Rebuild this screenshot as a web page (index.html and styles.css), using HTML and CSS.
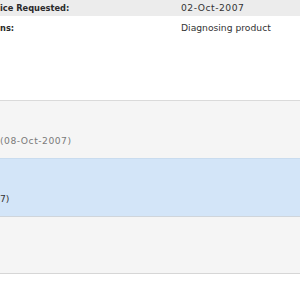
FILE: index.html
```html
<!DOCTYPE html>
<html lang="en">

<head>
  <meta charset="UTF-8" />
  <meta name="viewport" content="width=device-width, initial-scale=1.0" />
  <title>Service Request</title>
  <link rel="stylesheet" href="styles.css">
</head>

<body>
  <div class="details">
    <div class="row row-head">
      <span class="label">ice Requested:</span>
      <span class="value date">02-Oct-2007</span>
    </div>
    <div class="row row-body">
      <span class="label">ns:</span>
      <span class="value">Diagnosing product</span>
    </div>
  </div>
  <ul class="history">
    <li class="entry">
      <span class="entry-text muted date">(08-Oct-2007)</span>
    </li>
    <li class="entry selected">
      <span class="entry-text">7)</span>
    </li>
    <li class="entry last">
      <span class="entry-text"></span>
    </li>
  </ul>
</body>

</html>
```

FILE: styles.css
```css
body {
  margin: 0;
  width: 300px;
  height: 300px;
  overflow: hidden;
  background: #fff;
  font-family: "DejaVu Sans", Verdana, sans-serif;
  font-size: 9.2px;
  color: #333;
}

.row {
  display: grid;
  grid-template-columns: 181px auto;
  white-space: nowrap;
}

.label {
  font-family: "DejaVu Sans Condensed", "DejaVu Sans", sans-serif;
  font-weight: bold;
  color: #2a2a2a;
}

.row-head {
  height: 16px;
  line-height: 16px;
  background-color: #ececec;
}

.row-body {
  height: 84px;
  padding-top: 5px;
  box-sizing: border-box;
  line-height: 14px;
}

.history {
  list-style: none;
  margin: 0;
  padding: 0;
}

.entry {
  height: 58px;
  box-sizing: border-box;
  padding-top: 33px;
  line-height: 14px;
  background-color: #f5f5f5;
  border-top: 1px solid #dadada;
  white-space: nowrap;
}

.entry.selected {
  background-color: #d3e5f8;
  border-top-color: #c9dcef;
}

.entry.last {
  border-top-color: #cfd5db;
  border-bottom: 1px solid #d6d6d6;
}

/* dates are set a little wider */
.date {
  letter-spacing: 0.5px;
}

.muted {
  color: #7a7a7a;
}
```
